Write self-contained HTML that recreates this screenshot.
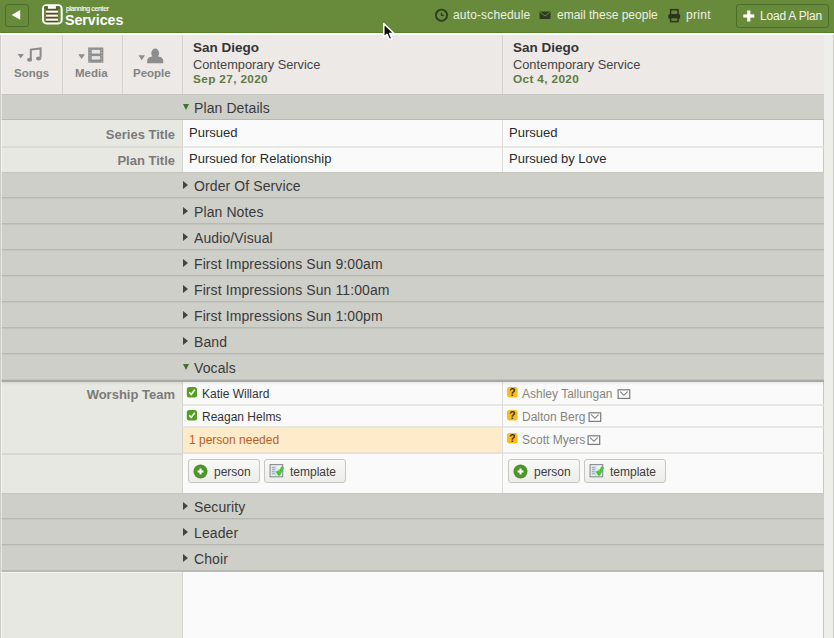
<!DOCTYPE html>
<html><head><meta charset="utf-8">
<style>
*{box-sizing:border-box;margin:0;padding:0}
html,body{width:834px;height:638px;overflow:hidden;background:#fafafa;font-family:"Liberation Sans",sans-serif}
.abs{position:absolute;white-space:nowrap}
#hdr{position:absolute;left:0;top:0;width:834px;height:33px;background:#678a3b;border-bottom:1px solid #588029}
#hline{position:absolute;left:0;top:33px;width:834px;height:2px;background:#fbfbf9}
#sub{position:absolute;left:0;top:35px;width:824px;height:59px;background:#ece9e7}
#left{position:absolute;left:0;top:94px;width:182px;height:544px;background:#e8e8e3}
#rstrip{position:absolute;left:824px;top:35px;width:9px;height:603px;background:#eeefea}
#rline{position:absolute;left:833px;top:35px;width:1px;height:603px;background:#cfcfca}
.vd{position:absolute;width:1px;background:#d3d3cf}
.sec{position:absolute;left:0;width:824px;height:26px;background:#cfcfc9;border-top:1px solid #c6c6c0;border-bottom:1px solid #b9b9b3}
.sec span{position:absolute;left:194px;top:4.6px;font-size:14px;color:#3a3a3a;letter-spacing:0.1px;white-space:nowrap}
.tri{position:absolute;left:183px;top:8px;width:0;height:0;border-top:4px solid transparent;border-bottom:4px solid transparent;border-left:5.5px solid #444}
.trid{position:absolute;left:183px;top:9px;width:0;height:0;border-left:3.6px solid transparent;border-right:3.6px solid transparent;border-top:6.5px solid #46702a}
.row{position:absolute;left:0;width:824px;height:26px}
.lab{position:absolute;left:0;top:0;width:182px;height:100%;background:#e8e8e3;border-bottom:2px solid #dcdcd7}
.lab span{position:absolute;right:7px;top:7px;font-size:13px;font-weight:bold;color:#7a7a7a;white-space:nowrap}
.c1{position:absolute;left:182px;top:0;width:321px;height:100%;background:#fafafa;border-bottom:2px solid #e6e6e2;border-left:1px solid #d3d3cf}
.c2{position:absolute;left:502px;top:0;width:322px;height:100%;background:#fafafa;border-bottom:2px solid #e6e6e2;border-left:1px solid #dcdcd8;border-right:1px solid #c9c9c4}
span.t{position:absolute;left:6px;top:5px;font-size:13px;color:#2a2a2a;white-space:nowrap}
.hi{position:absolute;font-size:12px;color:#eef0e6;white-space:nowrap}
.side{position:absolute;top:67px;font-size:11.5px;font-weight:bold;color:#838383;white-space:nowrap}
.ptitle{position:absolute;font-size:13.5px;font-weight:bold;color:#353535;white-space:nowrap}
.psvc{position:absolute;font-size:12.8px;color:#444;white-space:nowrap}
.pdate{position:absolute;font-size:11.8px;font-weight:bold;color:#5f7a45;white-space:nowrap;letter-spacing:0.35px}
.btn{position:absolute;height:24px;border:1px solid #c6c6c1;border-radius:3px;background:linear-gradient(#f9f9f8,#ececea)}
.btn span{position:absolute;top:5px;font-size:12px;color:#3c3c3c;white-space:nowrap}
.pname{position:absolute;font-size:12px;white-space:nowrap}
</style></head><body>
<div id="hdr"></div>
<div id="hline"></div>
<div id="sub"></div>
<div id="left"></div>
<div id="rstrip"></div>
<div id="rline"></div>
<div class="abs" style="left:0;top:35px;width:1px;height:603px;background:#cfcfcb"></div>

<!-- header left -->
<div class="abs" style="left:5px;top:4px;width:24px;height:23px;border:1px solid #4b6f26;border-radius:3px"></div>
<svg class="abs" style="left:0;top:0" width="40" height="33"><polygon points="11.7,15 20.2,10 20.2,19.7" fill="#fff"/></svg>
<svg class="abs" style="left:38px;top:0" width="28" height="28">
  <rect x="5" y="5.2" width="18.7" height="18.2" rx="3.5" fill="#678a3b" stroke="#fff" stroke-width="2"/>
  <rect x="7.8" y="8.9" width="12.2" height="13.2" fill="#5e4a1c"/>
  <rect x="7.8" y="10.6" width="12.2" height="2.1" fill="#fff"/>
  <rect x="7.8" y="14.6" width="12.2" height="2.1" fill="#fff"/>
  <rect x="7.8" y="18.6" width="12.2" height="2.1" fill="#fff"/>
  <rect x="6.2" y="6.2" width="3.7" height="2.7" fill="#55602a"/>
  <rect x="17.9" y="6.2" width="3.7" height="2.7" fill="#55602a"/>
  <rect x="9.9" y="6.1" width="8" height="2.6" fill="#fff"/>
</svg>
<div class="abs" style="left:66px;top:4.8px;font-size:6.8px;color:#fbfbf6;letter-spacing:-0.25px;-webkit-text-stroke:0.15px #fff">planning center</div>
<div class="abs" style="left:65px;top:11.5px;font-size:14.2px;font-weight:bold;color:#fff">Services</div>

<!-- header right -->
<svg class="abs" style="left:434px;top:8px" width="15" height="15"><circle cx="7.5" cy="7.2" r="5.6" fill="none" stroke="#2e3a24" stroke-width="1.8"/><path d="M7.5 4.8 V7.4 H9.8" fill="none" stroke="#2e3a24" stroke-width="1.3"/></svg>
<div class="hi" style="left:453px;top:8px;letter-spacing:0.15px">auto-schedule</div>
<svg class="abs" style="left:539px;top:11px" width="13" height="9"><rect x="0.5" y="0.5" width="11" height="7.5" fill="#2e3a24"/><path d="M1 1 L6 5 L11 1" fill="none" stroke="#678a3b" stroke-width="1"/></svg>
<div class="hi" style="left:557px;top:8px">email these people</div>
<svg class="abs" style="left:664px;top:6px" width="20" height="18"><rect x="6.6" y="3.7" width="7.4" height="5" fill="none" stroke="#2a3520" stroke-width="1.5"/><rect x="4.4" y="8.2" width="11.8" height="4.6" rx="1.2" fill="#2a3520"/><rect x="6.6" y="11.6" width="7.4" height="4" fill="#678a3b" stroke="#2a3520" stroke-width="1.5"/></svg>
<div class="hi" style="left:686px;top:8px;letter-spacing:0.3px">print</div>
<div class="abs" style="left:736px;top:4px;width:93px;height:24px;border:1px solid #4b6f26;border-radius:3px"></div>
<svg class="abs" style="left:743px;top:10px" width="12" height="12"><rect x="4.2" y="0.5" width="3.2" height="11" fill="#fff"/><rect x="0.3" y="4.4" width="11" height="3.2" fill="#fff"/></svg>
<div class="hi" style="left:760px;top:9px;letter-spacing:-0.2px;color:#f4f4ee">Load A Plan</div>

<!-- sub header dividers -->
<div class="vd" style="left:62px;top:35px;height:59px"></div>
<div class="vd" style="left:122px;top:35px;height:59px"></div>
<div class="vd" style="left:182px;top:35px;height:59px"></div>
<div class="vd" style="left:502px;top:35px;height:59px"></div>

<!-- side icons -->
<svg class="abs" style="left:0;top:44px" width="182" height="22">
  <polygon points="17.6,10 23.9,10 20.75,14.6" fill="#8d8d8d"/>
  <path d="M30.8 15 V5.6 L40.6 4.4 V13.5" fill="none" stroke="#8b8b8b" stroke-width="2"/>
  <ellipse cx="29.6" cy="15.8" rx="2.5" ry="2" fill="#8b8b8b"/>
  <ellipse cx="38.6" cy="14.4" rx="2.6" ry="2" fill="#8b8b8b"/>
  <polygon points="78.3,10.2 84.9,10.2 81.6,14.9" fill="#8d8d8d"/>
  <rect x="88.2" y="3.5" width="15.1" height="15.2" fill="#8d8d8d"/>
  <rect x="91.7" y="5.8" width="8.4" height="3.8" fill="#e6e4e2"/>
  <rect x="91.7" y="12.1" width="8.4" height="3.5" fill="#e6e4e2"/>
  <path d="M89.9 5 v1.2 M89.9 8 v1.2 M89.9 11 v1.2 M89.9 14 v1.2 M89.9 17 v1.2 M101.6 5 v1.2 M101.6 8 v1.2 M101.6 11 v1.2 M101.6 14 v1.2 M101.6 17 v1.2" stroke="#b4b4b2" stroke-width="1.1"/>
  <polygon points="138.5,11.2 145,11.2 141.75,16.2" fill="#8d8d8d"/>
  <ellipse cx="155.2" cy="9.2" rx="3.9" ry="4.6" fill="#8d8d8d"/>
  <path d="M147.2 19.3 V16.5 Q147.4 13.2 152 12.6 L158.4 12.6 Q163 13.2 163.2 16.5 V19.3 Z" fill="#8d8d8d"/>
</svg>
<div class="side" style="left:14px">Songs</div>
<div class="side" style="left:75px">Media</div>
<div class="side" style="left:133px">People</div>

<!-- plan col headers -->
<div class="ptitle" style="left:193px;top:40px">San Diego</div>
<div class="psvc" style="left:193px;top:57px">Contemporary Service</div>
<div class="pdate" style="left:193px;top:72px">Sep 27, 2020</div>
<div class="ptitle" style="left:513px;top:40px">San Diego</div>
<div class="psvc" style="left:513px;top:57px">Contemporary Service</div>
<div class="pdate" style="left:513px;top:72px">Oct 4, 2020</div>

<div class="sec" style="top:94px"><i class="trid"></i><span>Plan Details</span></div>
<div class="row" style="top:120px;height:28px"><div class="lab"><span>Series Title</span></div><div class="c1"><span class="t">Pursued</span></div><div class="c2"><span class="t">Pursued</span></div></div>
<div class="row" style="top:148px;height:24px"><div class="lab" style="border-bottom:none"><span style="top:5px">Plan Title</span></div><div class="c1" style="border-bottom:none"><span class="t" style="top:3px">Pursued for Relationship</span></div><div class="c2" style="border-bottom:none"><span class="t" style="top:3px">Pursued by Love</span></div></div>
<div class="sec" style="top:172px"><i class="tri"></i><span>Order Of Service</span></div>
<div class="sec" style="top:198px"><i class="tri"></i><span>Plan Notes</span></div>
<div class="sec" style="top:224px"><i class="tri"></i><span>Audio/Visual</span></div>
<div class="sec" style="top:250px"><i class="tri"></i><span>First Impressions Sun 9:00am</span></div>
<div class="sec" style="top:276px"><i class="tri"></i><span>First Impressions Sun 11:00am</span></div>
<div class="sec" style="top:302px"><i class="tri"></i><span>First Impressions Sun 1:00pm</span></div>
<div class="sec" style="top:328px"><i class="tri"></i><span>Band</span></div>
<div class="sec" style="top:354px;height:28px;border-bottom:2px solid #a9a9a6"><i class="trid"></i><span>Vocals</span><i style="position:absolute;left:0;bottom:0;width:100%;height:1px;background:#c3c3bf"></i></div>

<!-- worship team -->
<div class="abs" style="left:0;top:382px;width:182px;height:73px;background:#e8e8e3;border-bottom:2px solid #d8d8d3"></div>
<div class="abs" style="right:659px;top:386.5px;font-size:13px;font-weight:bold;color:#7a7a7a">Worship Team</div>
<div class="row" style="top:382px;height:24px"><div class="c1"></div><div class="c2"></div></div>
<div class="row" style="top:406px;height:22px"><div class="c1"></div><div class="c2"></div></div>
<div class="row" style="top:428px;height:26px"><div class="c1" style="background:#fdebc9;border-bottom-color:#e9e0cf"></div><div class="c2"></div></div>
<div class="row" style="top:454px;height:39px"><div class="c1" style="border-bottom:none"></div><div class="c2" style="border-bottom:none"></div></div>

<div class="abs" style="left:0;top:382px;width:824px;height:3px;background:linear-gradient(rgba(0,0,0,0.07),rgba(0,0,0,0))"></div>
<svg class="abs" style="left:186px;top:386px" width="12" height="12"><rect x="0.8" y="1" width="10.2" height="10.5" rx="2.5" fill="#53a01f"/><path d="M3.3 6.3 L5.2 8.5 L8.8 3.7" fill="none" stroke="#fff" stroke-width="1.6"/></svg>
<div class="pname" style="left:202px;top:387px;color:#333">Katie Willard</div>
<svg class="abs" style="left:186px;top:409px" width="12" height="12"><rect x="0.8" y="1" width="10.2" height="10.5" rx="2.5" fill="#53a01f"/><path d="M3.3 6.3 L5.2 8.5 L8.8 3.7" fill="none" stroke="#fff" stroke-width="1.6"/></svg>
<div class="pname" style="left:202px;top:410px;color:#333">Reagan Helms</div>
<div class="pname" style="left:189px;top:433px;color:#b5602c">1 person needed</div>

<svg class="abs" style="left:506px;top:386px" width="13" height="13"><rect x="1" y="1" width="10.6" height="10.5" rx="2.5" fill="#f6bd1d"/><text x="6.4" y="10.2" font-family="Liberation Sans" font-weight="bold" font-size="10.2" fill="#3a2a10" text-anchor="middle">?</text></svg>
<div class="pname" style="left:522px;top:387px;color:#85857c">Ashley Tallungan</div>
<svg class="abs" style="left:617px;top:389px" width="14" height="11"><rect x="1.1" y="0.8" width="11.6" height="8.6" fill="none" stroke="#7c7c7c" stroke-width="1.2"/><path d="M3.2 2.6 L6.9 6.3 L10.6 2.6" fill="none" stroke="#7c7c7c" stroke-width="1.1"/></svg>
<svg class="abs" style="left:506px;top:409px" width="13" height="13"><rect x="1" y="1" width="10.6" height="10.5" rx="2.5" fill="#f6bd1d"/><text x="6.4" y="10.2" font-family="Liberation Sans" font-weight="bold" font-size="10.2" fill="#3a2a10" text-anchor="middle">?</text></svg>
<div class="pname" style="left:522px;top:410px;color:#85857c">Dalton Berg</div>
<svg class="abs" style="left:588px;top:412px" width="14" height="11"><rect x="1.1" y="0.8" width="11.6" height="8.6" fill="none" stroke="#7c7c7c" stroke-width="1.2"/><path d="M3.2 2.6 L6.9 6.3 L10.6 2.6" fill="none" stroke="#7c7c7c" stroke-width="1.1"/></svg>
<svg class="abs" style="left:506px;top:432px" width="13" height="13"><rect x="1" y="1" width="10.6" height="10.5" rx="2.5" fill="#f6bd1d"/><text x="6.4" y="10.2" font-family="Liberation Sans" font-weight="bold" font-size="10.2" fill="#3a2a10" text-anchor="middle">?</text></svg>
<div class="pname" style="left:522px;top:433px;color:#85857c">Scott Myers</div>
<svg class="abs" style="left:587px;top:435px" width="14" height="11"><rect x="1.1" y="0.8" width="11.6" height="8.6" fill="none" stroke="#7c7c7c" stroke-width="1.2"/><path d="M3.2 2.6 L6.9 6.3 L10.6 2.6" fill="none" stroke="#7c7c7c" stroke-width="1.1"/></svg>

<!-- buttons -->
<div class="btn" style="left:188px;top:459px;width:72px"><svg class="abs" style="left:4px;top:4px" width="16" height="16"><circle cx="7.5" cy="7.5" r="7" fill="#4d9527"/><rect x="6.5" y="4.5" width="2" height="6" fill="#fff"/><rect x="4.5" y="6.5" width="6" height="2" fill="#fff"/></svg><span style="left:25px">person</span></div>
<div class="btn" style="left:264px;top:459px;width:82px"><svg class="abs" style="left:4px;top:4px" width="17" height="16"><rect x="1.1" y="0.6" width="12.6" height="12.2" fill="#eef2f6" stroke="#8c8c8c" stroke-width="1.1"/><rect x="2.6" y="2.2" width="3.6" height="9" fill="#c9d9e6"/><path d="M3.2 3.5 H5.6 M3.2 5.5 H5.6 M3.2 7.5 H5.6 M3.2 9.5 H5.6" stroke="#8b9fd6" stroke-width="0.8"/><path d="M6.8 2 V12" stroke="#b8b8c0" stroke-width="0.6"/><path d="M8 7 L10 10.3 L13.8 3" fill="none" stroke="#3cc83a" stroke-width="3" stroke-linejoin="round"/><path d="M9.6 5.2 L10.1 8.6" stroke="#a8b428" stroke-width="0.8"/></svg><span style="left:25px">template</span></div>
<div class="btn" style="left:508px;top:459px;width:72px"><svg class="abs" style="left:4px;top:4px" width="16" height="16"><circle cx="7.5" cy="7.5" r="7" fill="#4d9527"/><rect x="6.5" y="4.5" width="2" height="6" fill="#fff"/><rect x="4.5" y="6.5" width="6" height="2" fill="#fff"/></svg><span style="left:25px">person</span></div>
<div class="btn" style="left:584px;top:459px;width:82px"><svg class="abs" style="left:4px;top:4px" width="17" height="16"><rect x="1.1" y="0.6" width="12.6" height="12.2" fill="#eef2f6" stroke="#8c8c8c" stroke-width="1.1"/><rect x="2.6" y="2.2" width="3.6" height="9" fill="#c9d9e6"/><path d="M3.2 3.5 H5.6 M3.2 5.5 H5.6 M3.2 7.5 H5.6 M3.2 9.5 H5.6" stroke="#8b9fd6" stroke-width="0.8"/><path d="M6.8 2 V12" stroke="#b8b8c0" stroke-width="0.6"/><path d="M8 7 L10 10.3 L13.8 3" fill="none" stroke="#3cc83a" stroke-width="3" stroke-linejoin="round"/><path d="M9.6 5.2 L10.1 8.6" stroke="#a8b428" stroke-width="0.8"/></svg><span style="left:25px">template</span></div>

<div class="sec" style="top:493px"><i class="tri"></i><span>Security</span></div>
<div class="sec" style="top:519px"><i class="tri"></i><span>Leader</span></div>
<div class="sec" style="top:545px;height:27px;border-bottom:2px solid #b9b9b5"><i class="tri"></i><span>Choir</span></div>

<!-- bottom empty -->
<div class="abs" style="left:182px;top:572px;width:1px;height:66px;background:#d3d3cf"></div>
<div class="abs" style="left:823px;top:572px;width:1px;height:66px;background:#c9c9c4"></div>

<div class="abs" style="left:0;top:35px;width:1px;height:603px;background:#cdcdc9"></div>
<div class="abs" style="left:1px;top:35px;width:1px;height:603px;background:rgba(255,255,255,0.45)"></div>
<div class="abs" style="left:0;top:572px;width:182px;height:1px;background:rgba(255,255,255,0.5)"></div>
<!-- cursor -->
<svg class="abs" style="left:381px;top:21px" width="18" height="22"><path d="M2.8 2.6 L2.8 16.4 L6 13.4 L8.4 18.6 L10.9 17.5 L8.6 12.5 L13.1 12.5 Z" fill="#111" stroke="#fff" stroke-width="1.5" stroke-linejoin="round"/></svg>
</body></html>
